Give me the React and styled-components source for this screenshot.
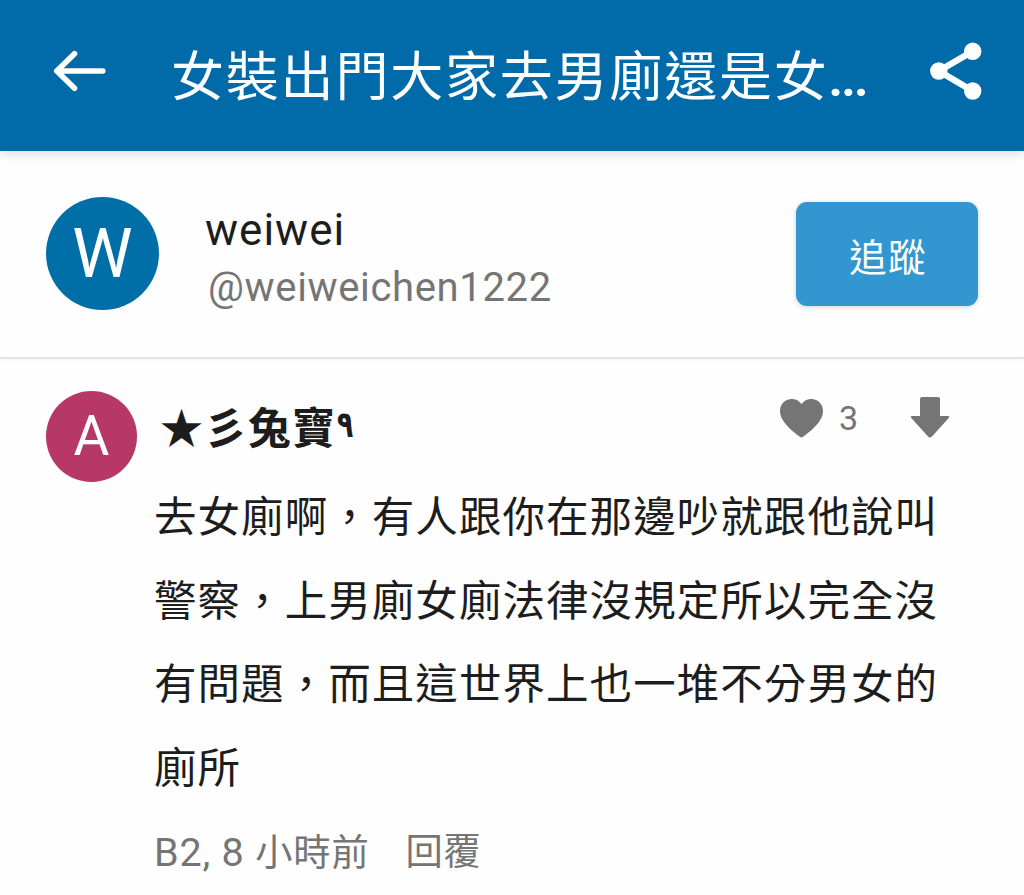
import React from 'react';
import styled, {createGlobalStyle} from "styled-components";

const palette = {
    primary: "#006ba8",
    avatarBlue: "#006fa7",
    avatarPink: "#b73766",
    button: "#3297d0",
    text: "#1d1d1d",
    muted: "#757575",
};

const GlobalStyle = createGlobalStyle`
    * {
        box-sizing: border-box;
    }
    body {
        margin: 0;
        background: #fefefe;
        color: ${palette.text};
        font-family: Roboto, "Noto Sans CJK TC", "DejaVu Sans", sans-serif;
        overflow: hidden;
    }
`;

const Page = styled.div`
    width: 1024px;
    height: 895px;
    display: flex;
    flex-flow: column nowrap;
    overflow: hidden;
`;

const Header = styled.header`
    flex: none;
    height: 151px;
    display: flex;
    align-items: flex-start;
    padding: 42px 42px 0 53px;
    background: ${palette.primary};
    color: white;
    box-shadow: 0 1px 12px rgba(0, 0, 0, 0.18);
    z-index: 1;
`;

const IconButton = styled.button`
    flex: none;
    display: flex;
    margin: 0;
    padding: 0;
    border: 0;
    background: none;
    color: inherit;
`;

const BackButton = styled(IconButton)`
    margin-top: 8px;
`;

const Title = styled.h1`
    flex: 1;
    margin: 3px 0 0 64px;
    font-size: 53px;
    font-weight: 400;
    line-height: 66px;
    letter-spacing: 1.8px;
    white-space: nowrap;
`;

const Dots = styled.span`
    font-size: 50px;
    font-weight: 700;
    letter-spacing: -1.8px;
`;

const Profile = styled.section`
    flex: none;
    height: 208px;
    display: flex;
    align-items: flex-start;
    padding: 46px 46px 0;
    border-bottom: 2px solid #e4e4e4;
    box-shadow: 0 2px 4px rgba(0, 0, 0, 0.03);
`;

const Avatar = styled.div`
    flex: none;
    width: ${({size}) => size}px;
    height: ${({size}) => size}px;
    display: flex;
    align-items: center;
    justify-content: center;
    border-radius: 50%;
    background: ${({color}) => color};
    color: white;
    font-size: ${({letter}) => letter}px;
    line-height: 1;
`;

const Names = styled.div`
    flex: 1;
    margin-left: 46px;
`;

const DisplayName = styled.div`
    margin-top: 5px;
    font-size: 44px;
    line-height: 56px;
    letter-spacing: 1px;
`;

const Handle = styled.div`
    margin-left: 3px;
    color: ${palette.muted};
    font-size: 40px;
    line-height: 60px;
    letter-spacing: 0.65px;
`;

const FollowButton = styled.button`
    width: 182px;
    height: 104px;
    margin: 5px 0 0;
    padding: 0 0 0 2px;
    border: 0;
    border-radius: 11px;
    background: ${palette.button};
    box-shadow: 0 1px 5px rgba(0, 0, 0, 0.18);
    color: white;
    font: inherit;
    font-size: 37.5px;
    letter-spacing: 1.2px;
`;

const Comment = styled.article`
    display: flex;
    align-items: flex-start;
    padding: 32px 74px 0 46px;
`;

const Content = styled.div`
    flex: 1;
    margin-left: 18px;
`;

const CommentTop = styled.div`
    display: flex;
    align-items: flex-start;
    height: 85px;
    padding-left: 5px;
`;

const Author = styled.div`
    flex: 1;
    height: 72px;
    font-family: "Noto Sans CJK TC", "DejaVu Sans", sans-serif;
    font-size: 43px;
    font-weight: 700;
    line-height: 68px;
    letter-spacing: 1px;
`;

const Digit = styled.span`
    display: inline-block;
    line-height: 1;
    font-family: "DejaVu Sans Condensed", "DejaVu Sans", sans-serif;
    font-size: 37px;
    transform: translate(1px, -7px) scaleX(0.8);
    transform-origin: left;
`;

const Votes = styled.div`
    display: flex;
    align-items: center;
    height: 54px;
    color: ${palette.muted};
`;

const Count = styled.span`
    width: 87px;
    padding-left: 16px;
    font-size: 34px;
`;

const Body = styled.p`
    margin: 0 0 0 -1px;
    font-size: 42.5px;
    line-height: 83.5px;
    letter-spacing: 1.06px;
    white-space: nowrap;
`;

const Meta = styled.div`
    display: flex;
    gap: 36px;
    margin-left: -1px;
    color: ${palette.muted};
    font-size: 37.3px;
    line-height: 85px;
    letter-spacing: 0.8px;
`;

const Latin = styled.span`
    font-size: 39.5px;
    letter-spacing: 0.8px;
`;

const BackIcon = () => (
    <svg width="54" height="42" viewBox="0 0 54 42" fill="none" stroke="currentColor"
         strokeWidth="5.6" strokeLinecap="round" strokeLinejoin="round">
        <path d="M21.5 3.8 3.8 21l17.7 17.2M3.8 21h46"/>
    </svg>
);

const ShareIcon = () => (
    <svg width="52" height="58" viewBox="0 0 52 58" fill="currentColor">
        <path d="M42.7 9.3 8.8 29l33.9 20" fill="none" stroke="currentColor" strokeWidth="6.4"/>
        <circle cx="42.7" cy="9.3" r="8.7"/>
        <circle cx="8.8" cy="29" r="8.7"/>
        <circle cx="42.7" cy="49" r="8.7"/>
    </svg>
);

const HeartIcon = () => (
    <svg width="43" height="39" viewBox="0 0 43 39" fill="currentColor">
        <path d="M21.5 38.5C19.5 37.7 0 24.5 0 12.2 0 5 5 0 11.7 0c4 0 7.6 1.9 9.8 5 2.2-3.1 5.8-5 9.8-5C38 0 43 5 43 12.2c0 12.3-19.5 25.5-21.5 26.3Z"/>
    </svg>
);

const DownIcon = () => (
    <svg width="40" height="42" viewBox="0 0 40 42" fill="currentColor">
        <path d="M12 0h16q2 0 2 2v17h7.5q3 0 1.2 2L22 39.5q-2 2-4 0L1.3 21Q-.5 19 2.5 19H10V2q0-2 2-2Z"/>
    </svg>
);

const lines = [
    "去女廁啊，有人跟你在那邊吵就跟他說叫",
    "警察，上男廁女廁法律沒規定所以完全沒",
    "有問題，而且這世界上也一堆不分男女的",
    "廁所",
];

const App = () => (
    <Page>
        <GlobalStyle/>
        <Header>
            <BackButton aria-label="返回"><BackIcon/></BackButton>
            <Title>女裝出門大家去男廁還是女<Dots>...</Dots></Title>
            <IconButton aria-label="分享"><ShareIcon/></IconButton>
        </Header>
        <Profile>
            <Avatar size={113} color={palette.avatarBlue} letter={68}>W</Avatar>
            <Names>
                <DisplayName>weiwei</DisplayName>
                <Handle>@weiweichen1222</Handle>
            </Names>
            <FollowButton>追蹤</FollowButton>
        </Profile>
        <Comment>
            <Avatar size={91} color={palette.avatarPink} letter={55}>A</Avatar>
            <Content>
                <CommentTop>
                    <Author>★彡兔寶<Digit>٩</Digit></Author>
                    <Votes>
                        <HeartIcon/>
                        <Count>3</Count>
                        <DownIcon/>
                    </Votes>
                </CommentTop>
                <Body>
                    {lines.map((line) => (
                        <React.Fragment key={line}>{line}<br/></React.Fragment>
                    ))}
                </Body>
                <Meta>
                    <span><Latin>B2, 8 </Latin>小時前</span>
                    <span>回覆</span>
                </Meta>
            </Content>
        </Comment>
    </Page>
);

export default App;
